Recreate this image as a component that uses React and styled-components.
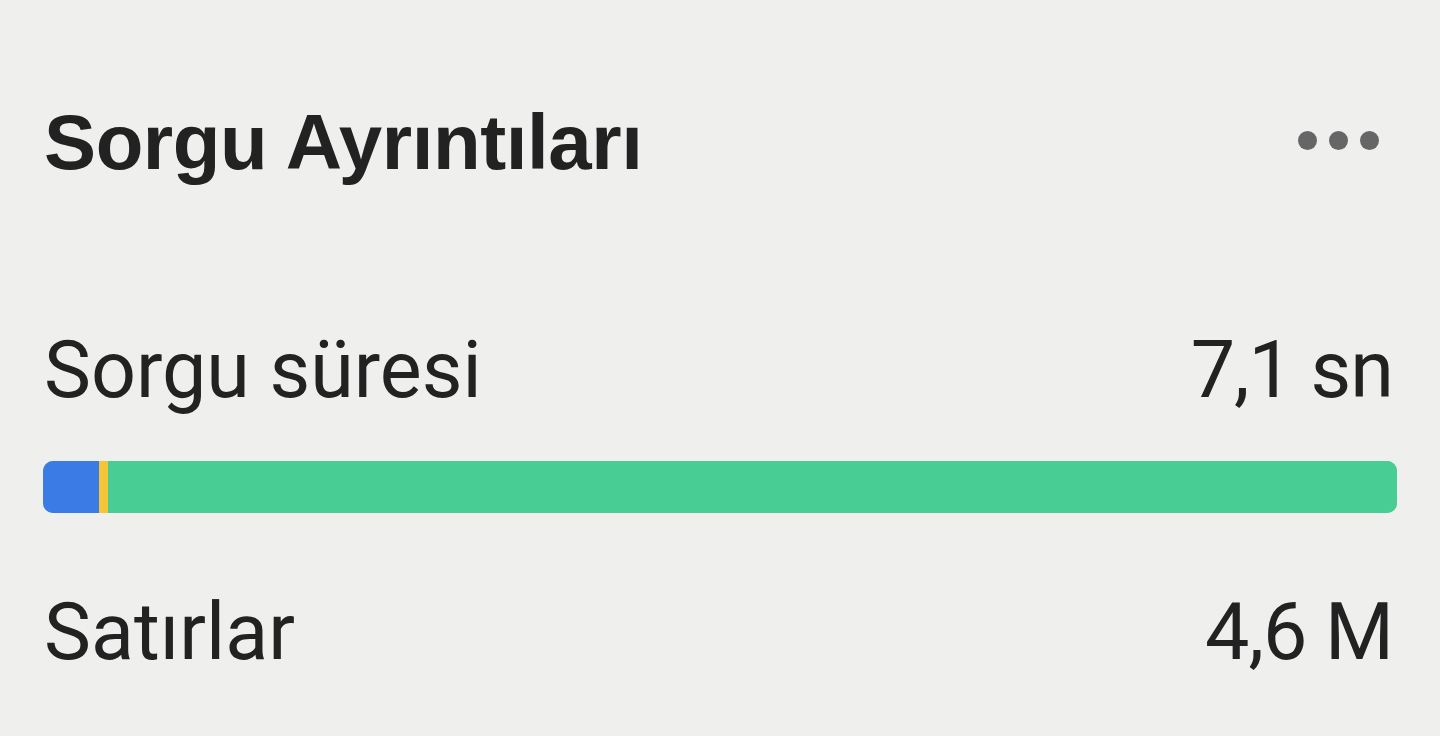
import React from 'react'
import styled, { createGlobalStyle } from 'styled-components'

const GlobalStyle = createGlobalStyle`
  html, body {
    margin: 0;
    padding: 0;
    background: #efefee;
  }
`

const Panel = styled.section`
  box-sizing: border-box;
  width: 1440px;
  height: 736px;
  padding: 102px 43px 0 43px;
  background: #efefee;
  color: #222222;
  overflow: hidden;
`

const Header = styled.header`
  display: flex;
  justify-content: space-between;
  align-items: center;
  height: 80px;
`

const Title = styled.h1`
  margin: 0 0 0 1px;
  font-family: 'Liberation Sans', Arial, sans-serif;
  font-weight: 700;
  font-size: 78px;
  line-height: 80px;
  letter-spacing: -0.4px;
`

const MoreButton = styled.button`
  display: flex;
  gap: 12px;
  margin: -3px 18px 0 0;
  padding: 0;
  border: none;
  background: none;
  cursor: pointer;
`

const Dot = styled.span`
  width: 19px;
  height: 19px;
  border-radius: 50%;
  background: #666666;
`

const Row = styled.div`
  display: flex;
  justify-content: space-between;
  align-items: baseline;
  margin-top: ${props => props.$gap}px;
  font-family: Roboto, 'Liberation Sans', sans-serif;
  font-size: 79px;
  line-height: 80px;
`

const Label = styled.span`
  margin-left: 1px;
`

const Value = styled.span`
  margin-right: 4px;
  letter-spacing: -1px;
`

const Bar = styled.div`
  display: flex;
  height: 52px;
  margin-top: 51px;
  border-radius: 10px;
  overflow: hidden;
  background: #48cd95;
`

const Segment = styled.div`
  flex: ${props => (props.$grow ? '1 1 auto' : '0 0 auto')};
  background: ${props => props.$color};
`

const segments = [
  { color: '#3a7be6', width: 56 },
  { color: '#f5c536', width: 9 },
  { color: '#48cd95', grow: true },
]

const App = () => (
  <>
    <GlobalStyle />
    <Panel>
      <Header>
        <Title>Sorgu Ayrıntıları</Title>
        <MoreButton aria-label="Daha fazla">
          <Dot />
          <Dot />
          <Dot />
        </MoreButton>
      </Header>
      <Row $gap={148}>
        <Label>Sorgu süresi</Label>
        <Value>7,1 sn</Value>
      </Row>
      <Bar>
        {segments.map((s, i) => (
          <Segment
            key={i}
            $color={s.color}
            $grow={s.grow}
            style={s.width ? { width: s.width } : undefined}
          />
        ))}
      </Bar>
      <Row $gap={79}>
        <Label>Satırlar</Label>
        <Value>4,6 M</Value>
      </Row>
    </Panel>
  </>
)

export default App
